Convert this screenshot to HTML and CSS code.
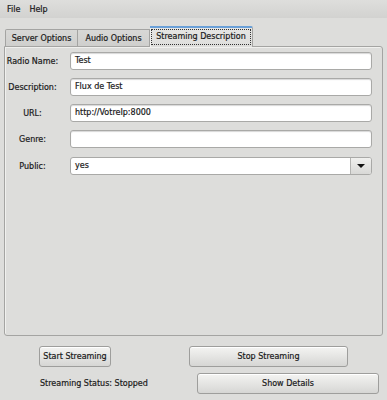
FILE: index.html
```html
<!DOCTYPE html>
<html lang="en">

<head>
    <meta charset="UTF-8">
    <title>Streaming</title>
    <link rel="stylesheet" href="styles.css">
</head>

<body>
    <div class="menubar">
        <span class="menu-item">File</span>
        <span class="menu-item">Help</span>
    </div>

    <div class="tabs">
        <div class="tab tab-server">Server Options</div>
        <div class="tab tab-audio">Audio Options</div>
        <div class="tab tab-stream active"><span class="focus">Streaming Description</span></div>
    </div>

    <div class="panel">
        <div class="form">
            <label class="form-label">Radio Name:</label>
            <div class="field">Test</div>

            <label class="form-label">Description:</label>
            <div class="field">Flux de Test</div>

            <label class="form-label">URL:</label>
            <div class="field">http://VotreIp:8000</div>

            <label class="form-label">Genre:</label>
            <div class="field"></div>

            <label class="form-label public-label">Public:</label>
            <div class="combo">
                <span class="combo-value">yes</span>
                <span class="combo-arrow"></span>
            </div>
        </div>
    </div>

    <div class="actions">
        <button class="btn btn-start">Start Streaming</button>
        <button class="btn btn-stop">Stop Streaming</button>
        <span class="status">Streaming Status: Stopped</span>
        <button class="btn btn-details">Show Details</button>
    </div>
</body>

</html>
```

FILE: styles.css
```css
* {
    box-sizing: border-box;
}

body {
    margin: 0;
    width: 387px;
    height: 400px;
    background-color: #dddddb;
    font-family: 'DejaVu Sans', sans-serif;
    font-size: 8px;
    color: #1a1a1a;
    overflow: hidden;
}

/* menu */
.menubar {
    height: 18px;
    display: flex;
    align-items: center;
    gap: 9px;
    padding: 0 7px;
    background: linear-gradient(#dededc, #d2d2d0);
}

.menu-item {
    -webkit-text-stroke: 0.2px #1a1a1a;
}

/* tabs */
.tabs {
    display: flex;
    align-items: flex-end;
    height: 20px;
    margin-top: 8px;
    padding-left: 5px;
    position: relative;
    z-index: 1;
}

.tab {
    height: 17px;
    display: flex;
    align-items: center;
    justify-content: center;
    border: 1px solid #a4a4a2;
    border-bottom: none;
    border-left: none;
    background: linear-gradient(#d8d8d6, #cfcfcd);
    -webkit-text-stroke: 0.2px #1a1a1a;
}

.tab-server {
    width: 73px;
    border-left: 1px solid #a4a4a2;
    border-top-left-radius: 2px;
}

.tab-audio {
    width: 72px;
}

.tab-stream {
    width: 103px;
}

.tab.active {
    height: 21px;
    margin-bottom: -1px;
    padding-bottom: 1px;
    border-top: 2px solid #6aa0d8;
    border-top-right-radius: 2px;
    background: linear-gradient(#e6e6e4, #dddddb);
    box-shadow: inset 1px 0 0 #f2f2f0;
}

.focus {
    padding: 2px 4px 3px;
    outline: 1px dotted #333;
}

/* panel */
.panel {
    height: 290px;
    margin: 0 4px;
    padding: 5px 10px 0 0;
    border: 1px solid #a4a4a2;
    border-radius: 0 3px 3px 3px;
    box-shadow: inset 1px 1px 0 #f0f0ee;
}

.form {
    display: grid;
    grid-template-columns: 55px 1fr;
    column-gap: 10px;
    row-gap: 8px;
    align-items: center;
}

.form-label {
    text-align: center;
    -webkit-text-stroke: 0.2px #1a1a1a;
}

.field {
    height: 18px;
    padding: 0 4px;
    line-height: 16px;
    background-color: #fff;
    border: 1px solid #a9a9a7;
    border-radius: 3px;
    box-shadow: inset 0 1px 1px #d8d8d8;
    -webkit-text-stroke: 0.2px #1a1a1a;
}

.public-label,
.combo {
    margin-top: 1px;
}

.combo {
    height: 18px;
    display: flex;
    background-color: #fff;
    border: 1px solid #a9a9a7;
    border-radius: 3px;
    overflow: hidden;
}

.combo-value {
    flex: 1;
    padding: 0 4px;
    line-height: 16px;
    -webkit-text-stroke: 0.2px #1a1a1a;
}

.combo-arrow {
    width: 21px;
    border-left: 1px solid #b4b4b2;
    background: linear-gradient(#f0f0ee, #d8d8d6);
    display: flex;
    align-items: center;
    justify-content: center;
}

.combo-arrow::after {
    content: '';
    border-left: 4px solid transparent;
    border-right: 4px solid transparent;
    border-top: 4px solid #111;
}

/* bottom buttons */
.actions {
    display: grid;
    grid-template-columns: 189px 1fr;
    row-gap: 6px;
    padding-top: 10px;
    align-items: center;
}

.btn {
    height: 21px;
    padding: 0;
    font-family: 'DejaVu Sans', sans-serif;
    font-size: 8px;
    color: #1a1a1a;
    border: 1px solid #9e9e9c;
    border-radius: 3px;
    background: linear-gradient(#f4f4f2, #e2e2e0 60%, #d6d6d4);
    box-shadow: inset 0 1px 0 #fff;
    -webkit-text-stroke: 0.2px #1a1a1a;
}

.btn-start {
    width: 72px;
    margin-left: 39px;
}

.btn-stop {
    width: 159px;
}

.status {
    padding-left: 40px;
    -webkit-text-stroke: 0.2px #1a1a1a;
}

.btn-details {
    width: 182px;
    margin-left: 8px;
}
```
